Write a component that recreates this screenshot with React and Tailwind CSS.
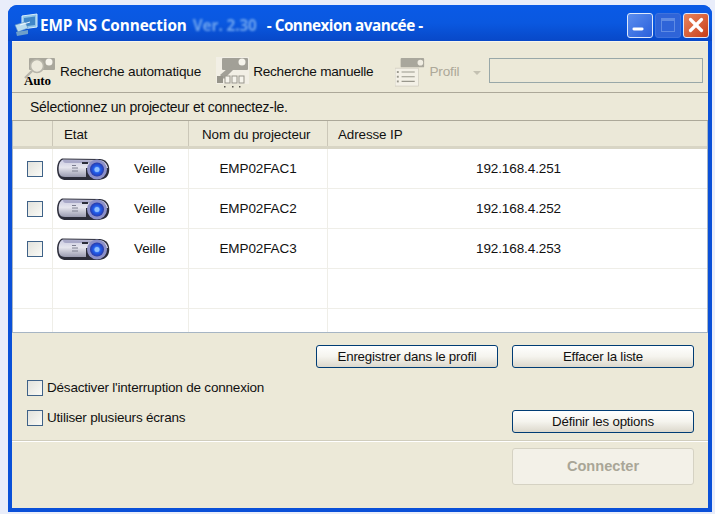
import { Minus, X } from "lucide-react";

const rows = [
  { name: "EMP02FAC1", ip: "192.168.4.251" },
  { name: "EMP02FAC2", ip: "192.168.4.252" },
  { name: "EMP02FAC3", ip: "192.168.4.253" },
];

function AppIcon() {
  return (
    <svg width="24" height="24" viewBox="0 0 24 24">
      <path d="M8 3 L23 1 L23 14 L8 16 Z" fill="#8fc4e8" stroke="#d8eefa" />
      <path d="M10 5 L21 3.5 L21 12 L10 13.5 Z" fill="#3f86c8" />
      <path d="M1 12 L11 9 L14 15 L4 19 Z" fill="#b9dcf0" stroke="#5b8fc0" strokeWidth="0.6" />
      <path d="M2 19 L14 17 L14 21 L3 23 Z" fill="#6e9fca" />
      <path d="M6 12 L16 9" stroke="#eef8ff" />
    </svg>
  );
}

function AutoIcon() {
  return (
    <div className="relative h-[31px] w-[33px] shrink-0">
      <svg width="33" height="31" viewBox="0 0 33 31" className="absolute left-0 top-0">
        <rect x="5" y="1" width="26" height="12" rx="1" fill="#a9a79c" />
        <circle cx="25" cy="5" r="3.5" fill="#f6f4ec" />
        <circle cx="13" cy="9" r="6.5" fill="#ece9dc" stroke="#b7b5aa" strokeWidth="1.6" />
        <path d="M8 14 L1 21" stroke="#b7b5aa" strokeWidth="2.4" />
      </svg>
      <span className="absolute left-0 top-[16px] font-['Liberation_Serif',serif] text-[13px] font-bold leading-[15px] text-black">
        Auto
      </span>
    </div>
  );
}

function ManualIcon() {
  return (
    <svg width="33" height="31" viewBox="0 0 33 31" className="shrink-0">
      <rect x="0" y="0" width="33" height="27" fill="#f2efe5" />
      <rect x="6" y="1" width="26" height="12" rx="1" fill="#a2a097" />
      <path d="M4 18 L18 6 L22 8 L8 22 Z" fill="#a2a097" />
      <circle cx="26" cy="5" r="3.5" fill="#f6f4ec" />
      <rect x="1" y="19" width="6" height="7" fill="#97958b" />
      <rect x="9" y="19" width="5" height="7" fill="#f6f4ec" stroke="#97958b" />
      <rect x="16" y="19" width="5" height="7" fill="#f6f4ec" stroke="#97958b" />
      <rect x="23" y="19" width="5" height="7" fill="#f6f4ec" stroke="#97958b" />
      <rect x="8" y="29" width="1.5" height="1.5" fill="#55534d" />
      <rect x="16" y="29" width="1.5" height="1.5" fill="#55534d" />
      <rect x="23" y="29" width="1.5" height="1.5" fill="#55534d" />
    </svg>
  );
}

function ProfileIcon() {
  return (
    <svg width="31" height="31" viewBox="0 0 33 31" className="shrink-0">
      <rect x="6" y="0" width="25" height="10" rx="1" fill="#a9a79c" />
      <circle cx="27" cy="5" r="3" fill="#f0ede2" />
      <path d="M0 11 L25 11 L25 30 L0 30 Z" fill="#f3f0e6" stroke="#cfccbf" strokeWidth="0.8" />
      <rect x="2" y="14" width="2" height="2" fill="#99978c" />
      <rect x="2" y="19" width="2" height="2" fill="#99978c" />
      <rect x="2" y="24" width="2" height="2" fill="#99978c" />
      <path d="M7 15 H21 M7 20 H21 M7 25 H21" stroke="#99978c" strokeWidth="1.2" />
    </svg>
  );
}

function ProjectorIcon() {
  return (
    <svg width="54" height="24" viewBox="0 0 54 24" className="shrink-0">
      <defs>
        <linearGradient id="body" x1="0" y1="0" x2="0" y2="1">
          <stop offset="0" stopColor="#c9c9e0" />
          <stop offset="0.45" stopColor="#e6e6ee" />
          <stop offset="1" stopColor="#9a9bb0" />
        </linearGradient>
        <radialGradient id="lens">
          <stop offset="0" stopColor="#7fb4ff" />
          <stop offset="0.55" stopColor="#1f5ae8" />
          <stop offset="1" stopColor="#2a3aa8" />
        </radialGradient>
      </defs>
      <path d="M2 18 C0 12 1 4 6 1.5 L44 2 C52 3 54 9 53 15 C52 21 47 23 41 23 L10 23 C6 23 3 21 2 18 Z" fill="#2c2d3a" />
      <path d="M3 16 C2 10 3 4 7 2.5 L44 3 C49 4 51 7 52 11 L30 11 L30 20 L9 20 C6 20 4 19 3 16 Z" fill="url(#body)" />
      <path d="M7 3 L44 3.5 L46 6 L10 6 C8 6 7 5 7 3 Z" fill="#a9a9c8" />
      <path d="M16 11 H22 M16 14 H22 M16 8.5 H20" stroke="#7c7e90" strokeWidth="1" />
      <rect x="26" y="5" width="6" height="2" fill="#2b2d3a" />
      <circle cx="41" cy="12.5" r="10" fill="#8c90c8" />
      <circle cx="41" cy="12.5" r="7" fill="url(#lens)" />
      <circle cx="41" cy="12.5" r="2.5" fill="#8fc0ff" />
    </svg>
  );
}

function XpCheckbox({ className = "" }) {
  return (
    <span
      className={`block h-[16px] w-[16px] shrink-0 border border-[#3f6288] bg-gradient-to-br from-[#e2e2dc] to-[#fafaf6] ${className}`}
    />
  );
}

function XpButton({ children, className = "" }) {
  return (
    <button
      type="button"
      className={`h-[23px] rounded-[3px] border border-[#003c74] bg-gradient-to-b from-white via-[#f5f4ee] to-[#dcd8cc] text-center text-[13.3px] tracking-[-0.2px] text-[#111] ${className}`}
    >
      {children}
    </button>
  );
}

function TableRow({ row }) {
  return (
    <div className="grid h-[40px] grid-cols-[40px_136px_139px_1fr] border-b border-[#efeee8] text-[13.5px] tracking-[-0.1px] text-[#111]">
      <div className="flex items-center justify-center border-r border-[#efeee8] pl-[4px] pt-[1px]">
        {row && <XpCheckbox />}
      </div>
      <div className="flex items-center border-r border-[#efeee8] pl-[3px] pt-[1px]">
        {row && (
          <>
            <ProjectorIcon />
            <span className="ml-[24px]">Veille</span>
          </>
        )}
      </div>
      <div className="flex items-center justify-center border-r border-[#efeee8] pt-[1px]">{row?.name}</div>
      <div className="flex items-center justify-center pl-[2px] pt-[1px]">{row?.ip}</div>
    </div>
  );
}

export default function App() {
  return (
    <div className="h-[514px] w-[715px] bg-[#e9edfa] pl-[8px] pr-[3px] pt-[5px] font-['Liberation_Sans',sans-serif] text-[#111]">
      <div className="h-[507px] w-[704px] overflow-hidden rounded-t-[9px] bg-[#0a50d8]">
        <div className="flex h-[36px] items-center bg-gradient-to-b from-[#0a5ae6] via-[#0a58e0] to-[#0848c8] pl-[6px] pr-[3px] pt-[4px]">
          <AppIcon />
          <div className="ml-[2px] flex flex-1 items-center font-['Open_Sans',sans-serif] text-[15.3px] font-bold tracking-[-0.1px] text-white">
            <span>EMP NS Connection</span>
            <span className="ml-[6px] text-[#6da3ee] blur-[1.2px]">Ver. 2.30</span>
            <span className="ml-[10px] tracking-[-0.5px]">- Connexion avancée -</span>
          </div>
          <div className="flex gap-[2px]">
            <div className="relative flex h-[25px] w-[26px] items-end rounded-[3px] border border-[#dfe9fb] bg-gradient-to-br from-[#5b8dee] to-[#2a5fdb]">
              <Minus className="mb-[1px] ml-[3px] h-[14px] w-[14px] text-white" strokeWidth={5} />
            </div>
            <div className="flex h-[25px] w-[26px] items-center justify-center rounded-[3px] border border-[#3f72dc] bg-[#2f64d8]">
              <span className="block h-[14px] w-[14px] border border-t-[3px] border-[#5f8be3]" />
            </div>
            <div className="flex h-[25px] w-[26px] items-center justify-center rounded-[3px] border border-[#dfe9fb] bg-gradient-to-br from-[#e8845c] to-[#c83c14]">
              <X className="h-[22px] w-[22px] text-white" strokeWidth={3.5} />
            </div>
          </div>
        </div>

        <div className="mx-[4px] h-[467px] bg-[#ece9d8]">
          <div className="flex h-[52px] items-center border-b border-t border-b-[#aca899] border-t-[#f7f5ec] pl-[12px] pr-[5px] pt-[11px] text-[13.6px] tracking-[-0.15px]">
            <AutoIcon />
            <span className="ml-[3px]">Recherche automatique</span>
            <div className="ml-[15px]">
              <ManualIcon />
            </div>
            <span className="ml-[4px] tracking-[-0.25px]">Recherche manuelle</span>
            <div className="ml-[22px]">
              <ProfileIcon />
            </div>
            <span className="ml-[3px] text-[#aca899]">Profil</span>
            <span className="ml-[14px] block h-0 w-0 border-x-[4px] border-t-[4px] border-x-transparent border-t-[#c4c1b2]" />
            <div className="mb-[4px] ml-[8px] h-[25px] flex-1 border border-[#99a8a8]" />
          </div>

          <div className="flex h-[28px] items-center border-b border-[#aca899] pl-[18px] pt-[1px] text-[14px] tracking-[-0.25px]">
            Sélectionnez un projecteur et connectez-le.
          </div>

          <div className="h-[212px] overflow-hidden border-x border-b border-[#a6b5c4] bg-white">
            <div className="grid h-[28px] grid-cols-[40px_136px_139px_1fr] border-b-[3px] border-[#d8d5c5] bg-[#ebe8d8] text-[13.4px] tracking-[-0.1px]">
              <div className="border-r border-[#cbc7b8]" />
              <div className="flex items-center border-r border-[#cbc7b8] pl-[11px] pt-[3px]">Etat</div>
              <div className="flex items-center border-r border-[#cbc7b8] pl-[13px] pt-[3px]">Nom du projecteur</div>
              <div className="flex items-center pl-[10px] pt-[3px]">Adresse IP</div>
            </div>
            {rows.map((row) => (
              <TableRow key={row.name} row={row} />
            ))}
            <TableRow />
            <TableRow />
          </div>

          <div className="flex h-[108px] flex-col border-b border-[#d0cdbd] shadow-[0_1px_0_#fff]">
            <div className="mt-[12px] flex justify-end gap-[14px] pr-[14px]">
              <XpButton className="w-[182px]">Enregistrer dans le profil</XpButton>
              <XpButton className="w-[182px]">Effacer la liste</XpButton>
            </div>
            <div className="flex flex-1 justify-between pl-[15px] pr-[14px]">
              <div className="mt-[12px] flex flex-col gap-[14px] text-[13.5px] tracking-[-0.2px]">
                <label className="flex h-[16px] items-center gap-[4px]">
                  <XpCheckbox />
                  Désactiver l'interruption de connexion
                </label>
                <label className="flex h-[16px] items-center gap-[4px]">
                  <XpCheckbox />
                  Utiliser plusieurs écrans
                </label>
              </div>
              <XpButton className="mt-[42px] w-[182px]">Définir les options</XpButton>
            </div>
          </div>

          <div className="flex justify-end pr-[14px] pt-[7px]">
            <button
              type="button"
              className="h-[37px] w-[182px] rounded-[3px] border border-[#d5d2c3] bg-[#f3f1e8] text-[14.6px] font-bold text-[#a9a697]"
            >
              Connecter
            </button>
          </div>
        </div>
      </div>
    </div>
  );
}
